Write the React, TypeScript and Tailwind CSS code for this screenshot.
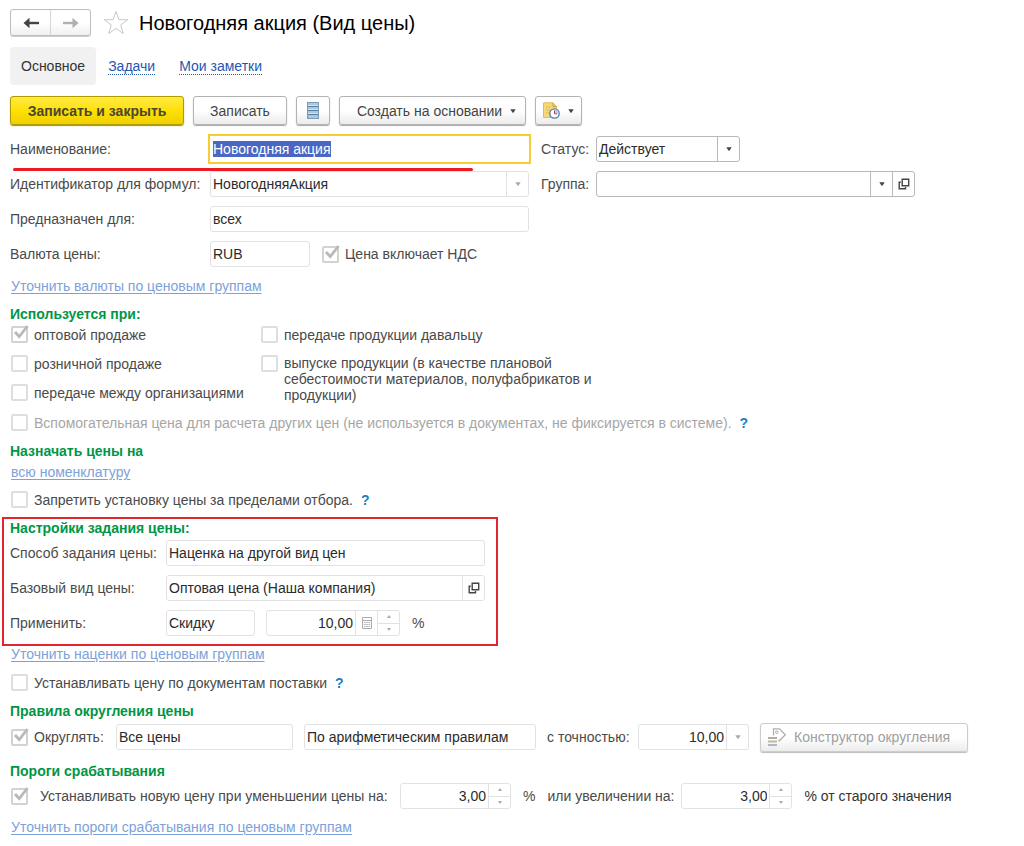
import React, { useEffect, useRef } from 'react';

const ArrowDown: React.FC = () => (
  <svg className="h-1 w-1.5" viewBox="0 0 6 4" fill="currentColor" aria-hidden="true">
    <path d="M.3.300h5.400L3.400 3.700h-.8z" />
  </svg>
);

const OpenIcon: React.FC = () => (
  <svg className="h-3 w-3 text-[#444]" viewBox="0 0 12 12" fill="none" stroke="currentColor" strokeWidth="1.4" aria-hidden="true">
    <path d="M4.200 1.200h6.500v6.500H4.200z" />
    <path d="M2.800 4.200H1.200v6.500h6.300V9" />
  </svg>
);

interface CheckProps {
  id: string;
  checked?: boolean;
}

const Check: React.FC<CheckProps> = ({ id, checked }) => (
  <span className="relative ml-px block h-[17px] w-[17px] shrink-0">
    <input
      id={id}
      type="checkbox"
      defaultChecked={checked}
      className="peer block h-[17px] w-[17px] appearance-none rounded-[2px] border-2 border-[#dedede] bg-white checked:border-[#d2d2d2]"
    />
    <svg
      className="pointer-events-none absolute -top-0.5 left-0 hidden h-5 w-5 text-[#b9b9b9] peer-checked:block"
      viewBox="0 0 20 20"
      fill="none"
      stroke="currentColor"
      strokeWidth="2.8"
      aria-hidden="true"
    >
      <path d="M4 8l4.200 4.500L16.500 2" />
    </svg>
  </span>
);

interface CheckRowProps extends CheckProps {
  label: string;
  help?: boolean;
  muted?: boolean;
}

const CheckRow: React.FC<CheckRowProps> = ({ id, checked, label, help, muted }) => (
  <div className="flex h-[17px] items-center">
    <Check id={id} checked={checked} />
    <label htmlFor={id} className={`ml-1.5 whitespace-nowrap ${muted ? 'text-[#a6a6a6]' : ''}`}>
      {label}
    </label>
    {help && (
      <button type="button" className="ml-2 font-bold text-[#1b7fc0]">
        ?
      </button>
    )}
  </div>
);

const Heading: React.FC<{ className?: string; children: React.ReactNode }> = ({ className = '', children }) => (
  <h2 className={`font-bold text-[#009646] ${className}`}>{children}</h2>
);

const RefineLink: React.FC<{ className?: string; children: React.ReactNode }> = ({ className = '', children }) => (
  <a href="#" className={`ml-px block w-fit text-[#7da2da] underline underline-offset-2 ${className}`}>
    {children}
  </a>
);

interface FieldProps {
  id: string;
  value: string;
  className: string;
  label?: string;
  strong?: boolean;
  right?: boolean;
  children?: React.ReactNode;
}

const Field: React.FC<FieldProps> = ({ id, value, className, label, strong, right, children }) => (
  <div
    className={`flex h-[26px] shrink-0 items-stretch rounded-[3px] border bg-white ${
      strong ? 'border-[#b8b8b8]' : 'border-[#e2e2e2]'
    } ${className}`}
  >
    <input
      id={id}
      type="text"
      aria-label={label}
      defaultValue={value}
      className={`min-w-0 flex-1 bg-transparent px-0.5 text-[#2b2b2b] outline-none ${right ? 'text-right' : ''}`}
    />
    {children}
  </div>
);

interface FieldButtonProps {
  label: string;
  strong?: boolean;
  children: React.ReactNode;
}

const FieldButton: React.FC<FieldButtonProps> = ({ label, strong, children }) => (
  <button
    type="button"
    aria-label={label}
    className={`flex w-[22px] shrink-0 items-center justify-center border-l ${
      strong ? 'border-[#b8b8b8] text-[#444]' : 'border-[#e2e2e2] text-[#aaa]'
    }`}
  >
    {children}
  </button>
);

const Spinner: React.FC = () => (
  <div className="flex w-[22px] shrink-0 flex-col border-l border-[#e2e2e2] text-[#aaa]">
    <button type="button" aria-label="Увеличить" className="flex flex-1 items-center justify-center border-b border-[#e2e2e2]">
      <svg className="h-[3px] w-1" viewBox="0 0 4 3" fill="currentColor" aria-hidden="true">
        <path d="M0 3h4L2 0z" />
      </svg>
    </button>
    <button type="button" aria-label="Уменьшить" className="flex flex-1 items-center justify-center">
      <svg className="h-[3px] w-1" viewBox="0 0 4 3" fill="currentColor" aria-hidden="true">
        <path d="M0 0h4L2 3z" />
      </svg>
    </button>
  </div>
);

const toolButton =
  'flex h-[29px] shrink-0 items-center justify-center rounded-[3px] border border-[#b3b3b3] bg-linear-to-b from-white from-50% to-[#ececec] text-[#444] shadow-[0_1px_1px_#a8a8a8] whitespace-nowrap';

const App: React.FC = () => {
  const nameRef = useRef<HTMLInputElement>(null);

  useEffect(() => {
    nameRef.current?.focus();
    nameRef.current?.select();
  }, []);

  return (
    <main className="bg-white pt-[9px] pr-2 pb-3 pl-2.5 font-['Liberation_Sans',Arial,sans-serif] text-sm leading-4 text-[#4a4a4a]">
      <header className="flex h-[27px] items-center">
        <div className="flex h-[27px] w-[81px] rounded-[3px] border border-[#bdbdbd] bg-linear-to-b from-white from-50% to-[#f0f0f0] shadow-[0_1px_0_#cfcfcf]">
          <button type="button" aria-label="Назад" className="flex flex-1 items-center justify-center border-r border-[#d6d6d6] text-[#444]">
            <svg className="h-3 w-4" viewBox="0 0 16 12" fill="none" stroke="currentColor" strokeWidth="2.4" aria-hidden="true">
              <path d="M4 6h12" />
              <path d="M6.500 .8L.5 6l6 5.200z" fill="currentColor" stroke="none" />
            </svg>
          </button>
          <button type="button" aria-label="Вперед" className="flex flex-1 items-center justify-center text-[#b0b0b0]">
            <svg className="h-3 w-4" viewBox="0 0 16 12" fill="none" stroke="currentColor" strokeWidth="2.4" aria-hidden="true">
              <path d="M0 6h12" />
              <path d="M9.500 .8l6 5.200-6 5.200z" fill="currentColor" stroke="none" />
            </svg>
          </button>
        </div>
        <button type="button" aria-label="В избранное" className="ml-3 text-[#c3c8ce]">
          <svg className="h-[25px] w-[26px]" viewBox="0 0 26 25" fill="none" stroke="currentColor" aria-hidden="true">
            <path d="M13 1.500l2.900 8.200h8.800l-7 5.300 2.600 8.600L13 18.400l-7.300 5.200L8.300 15l-7-5.300h8.800z" />
          </svg>
        </button>
        <h1 className="ml-2.5 text-xl leading-6 text-black">Новогодняя акция (Вид цены)</h1>
      </header>

      <nav className="mt-[11px] flex h-[38px] items-center">
        <a href="#" className="flex h-full items-center rounded bg-[#f1f1f1] px-[11px] text-[#333]">
          Основное
        </a>
        <a href="#" className="ml-3 border-b border-dotted border-[#1f57b0] text-[#1f57b0]">
          Задачи
        </a>
        <a href="#" className="ml-6 border-b border-dotted border-[#1f57b0] text-[#1f57b0]">
          Мои заметки
        </a>
      </nav>

      <div className="mt-[11px] flex gap-[9px]">
        <button
          type="button"
          className="flex h-[29px] w-[174px] shrink-0 items-center justify-center rounded-[3px] border border-[#b09b00] bg-linear-to-b from-[#ffea3d] via-[#ffe000] to-[#efd000] font-bold whitespace-nowrap text-[#4a4633] shadow-[0_1px_1px_#a89400]"
        >
          Записать и закрыть
        </button>
        <button type="button" className={`${toolButton} w-[94px]`}>
          Записать
        </button>
        <button type="button" aria-label="Список" className={`${toolButton} w-[34px]`}>
          <svg className="h-[17px] w-3" viewBox="0 0 12 17" aria-hidden="true">
            <rect x="0.500" y="0.500" width="11" height="16" fill="#a9c9df" stroke="#7d9cb4" />
            <path d="M1 4.500h10M1 8.500h10M1 12.500h10" stroke="#56809f" />
            <path d="M1 3.500h10M1 7.500h10M1 11.500h10" stroke="#d3e5f0" />
          </svg>
        </button>
        <button type="button" className={`${toolButton} w-[187px] gap-2 pl-2`}>
          Создать на основании
          <ArrowDown />
        </button>
        <button type="button" aria-label="Напоминание" className={`${toolButton} w-[47px] gap-2`}>
          <svg className="h-[17px] w-[17px]" viewBox="0 0 17 17" fill="none" aria-hidden="true">
            <path d="M.5.800h9.500l3.500 3.700V15.500H.5z" fill="#f5d77c" stroke="#e0bc58" />
            <path d="M10 .8v3.700h3.500" stroke="#c99f35" />
            <path d="M3 5h5M3 8h4M3 11h3" stroke="#dfbb5a" />
            <circle cx="11.500" cy="11.500" r="4.700" fill="#fff" stroke="#4f78ac" strokeWidth="1.300" />
            <path d="M11.500 11.500V7.500A4 4 0 0 1 15.500 11.500z" fill="#b9d0ea" />
            <path d="M11.500 12V8.500" stroke="#d23b3b" />
            <path d="M11.500 11.800h2.800" stroke="#4f78ac" />
          </svg>
          <ArrowDown />
        </button>
      </div>

      <div className="mt-[11px] flex flex-col gap-[9px]">
        <div className="relative flex items-center">
          <label htmlFor="name" className="w-[200px] shrink-0">Наименование:</label>
          <input
            ref={nameRef}
            id="name"
            type="text"
            defaultValue="Новогодняя акция"
            className="h-[26px] w-[319px] shrink-0 px-[3px] text-[#2b2b2b] ring-2 ring-[#f7cd32] outline-none selection:bg-[#4b67c5] selection:text-white"
          />
          <label htmlFor="status" className="ml-3 w-[55px] shrink-0">Статус:</label>
          <div className="relative h-[26px] w-[144px] shrink-0">
            <select
              id="status"
              className="h-full w-full appearance-none rounded-[3px] border border-[#b8b8b8] bg-white px-0.5 text-[#2b2b2b]"
            >
              <option>Действует</option>
            </select>
            <span className="pointer-events-none absolute inset-y-px right-px flex w-[22px] items-center justify-center border-l border-[#b8b8b8] text-[#444]">
              <ArrowDown />
            </span>
          </div>
          <span className="absolute top-8 left-[3px] h-[3px] w-[460px] rounded-full bg-[#ec1c24]" />
        </div>
        <div className="flex items-center">
          <label htmlFor="formula" className="w-[200px] shrink-0 whitespace-nowrap">Идентификатор для формул:</label>
          <Field id="formula" value="НовогодняяАкция" className="w-[319px]">
            <FieldButton label="Выбрать идентификатор">
              <ArrowDown />
            </FieldButton>
          </Field>
          <label htmlFor="group" className="ml-3 w-[55px] shrink-0">Группа:</label>
          <Field id="group" value="" strong className="w-[319px]">
            <FieldButton label="Выбрать группу" strong>
              <ArrowDown />
            </FieldButton>
            <FieldButton label="Открыть группу" strong>
              <OpenIcon />
            </FieldButton>
          </Field>
        </div>
        <div className="flex items-center">
          <label htmlFor="purpose" className="w-[200px] shrink-0">Предназначен для:</label>
          <Field id="purpose" value="всех" className="w-[319px]" />
        </div>
        <div className="flex items-center">
          <label htmlFor="currency" className="w-[200px] shrink-0">Валюта цены:</label>
          <Field id="currency" value="RUB" className="mr-[11px] w-[100px]" />
          <CheckRow id="vat" checked label="Цена включает НДС" />
        </div>
      </div>

      <RefineLink className="mt-[11px]">Уточнить валюты по ценовым группам</RefineLink>

      <Heading className="mt-3">Используется при:</Heading>
      <div className="mt-1 flex">
        <div className="flex w-[250px] shrink-0 flex-col gap-3">
          <CheckRow id="wholesale" checked label="оптовой продаже" />
          <CheckRow id="retail" label="розничной продаже" />
          <CheckRow id="transfer" label="передаче между организациями" />
        </div>
        <div className="flex flex-col gap-3">
          <CheckRow id="tolling" label="передаче продукции давальцу" />
          <div className="flex items-start">
            <Check id="output" />
            <label htmlFor="output" className="ml-1.5 w-[330px]">
              выпуске продукции (в качестве плановой себестоимости материалов, полуфабрикатов и продукции)
            </label>
          </div>
        </div>
      </div>
      <div className="mt-[11px]">
        <CheckRow
          id="auxiliary"
          label="Вспомогательная цена для расчета других цен (не используется в документах, не фиксируется в системе)."
          help
          muted
        />
      </div>

      <Heading className="mt-3">Назначать цены на</Heading>
      <RefineLink className="mt-[5px]">всю номенклатуру</RefineLink>
      <div className="mt-[11px]">
        <CheckRow id="restrict" label="Запретить установку цены за пределами отбора." help />
      </div>

      <section className="mt-[9px] -ml-2 w-[496px] border-2 border-[#e3262e] pt-px pb-2 pl-1.5">
        <Heading>Настройки задания цены:</Heading>
        <div className="mt-1 flex flex-col gap-[9px]">
          <div className="flex items-center">
            <label htmlFor="method" className="w-[156px] shrink-0 whitespace-nowrap">Способ задания цены:</label>
            <Field id="method" value="Наценка на другой вид цен" className="w-[319px]" />
          </div>
          <div className="flex items-center">
            <label htmlFor="base" className="w-[156px] shrink-0">Базовый вид цены:</label>
            <Field id="base" value="Оптовая цена (Наша компания)" className="w-[319px]">
              <FieldButton label="Открыть вид цены">
                <OpenIcon />
              </FieldButton>
            </Field>
          </div>
          <div className="flex items-center">
            <label htmlFor="apply" className="w-[156px] shrink-0">Применить:</label>
            <Field id="apply" value="Скидку" className="w-[89px]" />
            <Field id="percent" value="10,00" label="Процент" right className="ml-[11px] w-[134px]">
              <FieldButton label="Калькулятор">
                <svg className="h-3 w-2.5" viewBox="0 0 10 12" fill="none" stroke="#aaa" aria-hidden="true">
                  <path d="M.5.500h9v11h-9zM.5 3.500h9" />
                  <path d="M2 5.500h6M2 7.500h6M2 9.500h6" strokeDasharray="1.500 .8" />
                </svg>
              </FieldButton>
              <Spinner />
            </Field>
            <span className="ml-3">%</span>
          </div>
        </div>
      </section>

      <RefineLink>Уточнить наценки по ценовым группам</RefineLink>
      <div className="mt-3">
        <CheckRow id="supply" label="Устанавливать цену по документам поставки" help />
      </div>

      <Heading className="mt-3">Правила округления цены</Heading>
      <div className="mt-[5px] flex items-center">
        <Check id="round" checked />
        <label htmlFor="round" className="ml-1.5 w-[82px] shrink-0">Округлять:</label>
        <Field id="scope" value="Все цены" label="Какие цены округлять" className="w-[177px]" />
        <Field id="rule" value="По арифметическим правилам" label="Правило округления" className="ml-[11px] w-[232px]" />
        <label htmlFor="precision" className="ml-[11px] w-[91px] shrink-0 whitespace-nowrap">с точностью:</label>
        <Field id="precision" value="10,00" right className="w-[111px]">
          <FieldButton label="Выбрать точность">
            <ArrowDown />
          </FieldButton>
        </Field>
        <button
          type="button"
          className="-my-0.5 ml-[11px] flex h-[29px] w-[208px] shrink-0 items-center gap-2 rounded-[3px] border border-[#cdcdcd] bg-linear-to-b from-white from-50% to-[#ececec] pl-[7px] whitespace-nowrap text-[#a0a0a0] shadow-[0_1px_1px_#bcbcbc]"
        >
          <svg className="h-[18px] w-[18px]" viewBox="0 0 18 18" fill="none" stroke="#b0b0b0" aria-hidden="true">
            <path d="M5.500 7.500V.800h6l5.800 6-5.800 6-1-1" strokeWidth="1.300" />
            <circle cx="8.800" cy="4.200" r="1.300" />
            <path d="M0 10h9" stroke="#b5aca3" strokeWidth="2" />
            <path d="M0 13.500h9" stroke="#c4b6a2" strokeWidth="2" />
            <path d="M0 17h9" stroke="#a9bac6" strokeWidth="2" />
          </svg>
          Конструктор округления
        </button>
      </div>

      <Heading className="mt-[13px]">Пороги срабатывания</Heading>
      <div className="mt-1 flex items-center">
        <Check id="threshold" checked />
        <label htmlFor="threshold" className="ml-3 w-[360px] shrink-0 whitespace-nowrap">
          Устанавливать новую цену при уменьшении цены на:
        </label>
        <Field id="decrease" value="3,00" label="Уменьшение цены" right className="w-[111px]">
          <Spinner />
        </Field>
        <span className="ml-3">%</span>
        <label htmlFor="increase" className="ml-3 w-[134px] shrink-0 whitespace-nowrap">или увеличении на:</label>
        <Field id="increase" value="3,00" right className="w-[111px]">
          <Spinner />
        </Field>
        <span className="ml-3 whitespace-nowrap text-[#333]">% от старого значения</span>
      </div>

      <RefineLink className="mt-2.5">Уточнить пороги срабатывания по ценовым группам</RefineLink>
    </main>
  );
};

export default App;
